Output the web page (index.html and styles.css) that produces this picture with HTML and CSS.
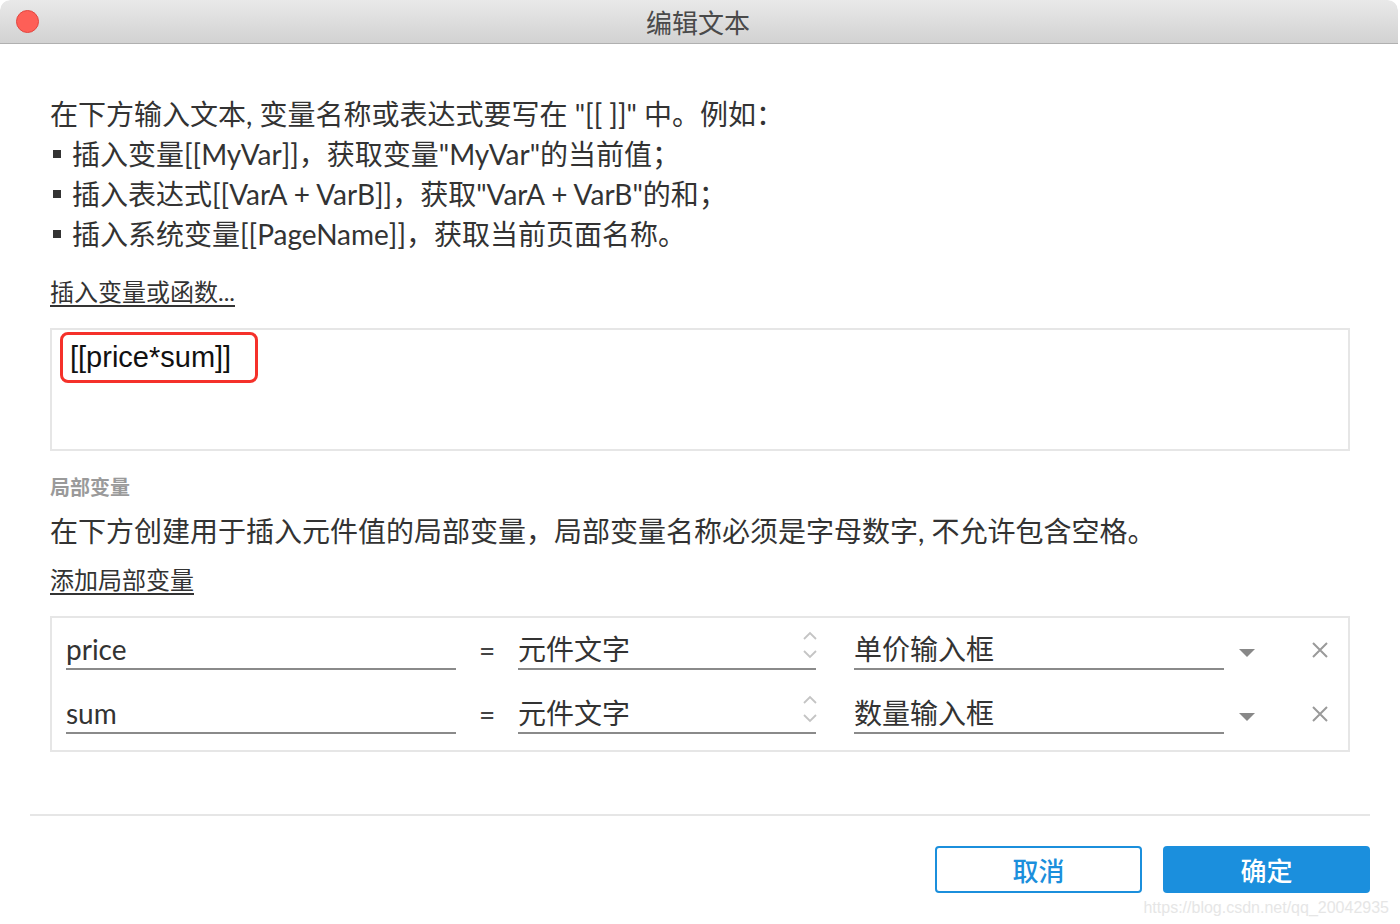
FILE: index.html
```html
<!DOCTYPE html>
<html lang="zh-CN">
<head>
    <meta charset="UTF-8">
    <title>编辑文本</title>
    <link rel="stylesheet" href="styles.css">
</head>
<body>
    <div class="window">
        <div class="titlebar">
            <span class="close-dot"></span>
            <span class="title">编辑文本</span>
        </div>

        <div class="content">
            <div class="intro">
                <p>在下方输入文本, 变量名称或表达式要写在 "[[ ]]" 中。例如：</p>
                <p><span class="bullet"></span>插入变量[[MyVar]]，获取变量"MyVar"的当前值；</p>
                <p><span class="bullet"></span>插入表达式[[VarA + VarB]]，获取"VarA + VarB"的和；</p>
                <p><span class="bullet"></span>插入系统变量[[PageName]]，获取当前页面名称。</p>
            </div>

            <a class="link insert-link">插入变量或函数...</a>

            <div class="text-box">
                <span class="marked">[[price*sum]]</span>
            </div>

            <div class="section-label">局部变量</div>
            <p class="desc">在下方创建用于插入元件值的局部变量，局部变量名称必须是字母数字, 不允许包含空格。</p>
            <a class="link add-link">添加局部变量</a>

            <div class="var-table">
                <div class="var-row">
                    <div class="field name-field">price</div>
                    <div class="equals">=</div>
                    <div class="field type-field">元件文字
                        <svg class="spinner" width="16" height="30" viewBox="0 0 16 30"><path d="M2 9 L8 3 L14 9" fill="none" stroke="#c4c4c4" stroke-width="1.8"/><path d="M2 21 L8 27 L14 21" fill="none" stroke="#c4c4c4" stroke-width="1.8"/></svg>
                    </div>
                    <div class="field target-field">单价输入框</div>
                    <div class="caret"><svg width="18" height="10" viewBox="0 0 18 10"><path d="M1 1 H17 L9 9 Z" fill="#888"/></svg></div>
                    <div class="remove"><svg width="18" height="18" viewBox="0 0 18 18"><path d="M2 2 L16 16 M16 2 L2 16" stroke="#9a9a9a" stroke-width="2"/></svg></div>
                </div>
                <div class="var-row">
                    <div class="field name-field">sum</div>
                    <div class="equals">=</div>
                    <div class="field type-field">元件文字
                        <svg class="spinner" width="16" height="30" viewBox="0 0 16 30"><path d="M2 9 L8 3 L14 9" fill="none" stroke="#c4c4c4" stroke-width="1.8"/><path d="M2 21 L8 27 L14 21" fill="none" stroke="#c4c4c4" stroke-width="1.8"/></svg>
                    </div>
                    <div class="field target-field">数量输入框</div>
                    <div class="caret"><svg width="18" height="10" viewBox="0 0 18 10"><path d="M1 1 H17 L9 9 Z" fill="#888"/></svg></div>
                    <div class="remove"><svg width="18" height="18" viewBox="0 0 18 18"><path d="M2 2 L16 16 M16 2 L2 16" stroke="#9a9a9a" stroke-width="2"/></svg></div>
                </div>
            </div>
        </div>

        <div class="footer">
            <button class="btn btn-cancel">取消</button>
            <button class="btn btn-ok">确定</button>
        </div>

        <div class="watermark">https://blog.csdn.net/qq_20042935</div>
    </div>
</body>
</html>
```

FILE: styles.css
```css
body {
    margin: 0;
    background: #ffffff;
    font-family: 'Lato', 'Noto Sans CJK SC', sans-serif;
    color: #333;
}
.window {
    position: relative;
    width: 1398px;
    height: 924px;
    background: #fff;
    border-radius: 10px;
    overflow: hidden;
}
.titlebar {
    position: relative;
    height: 43px;
    background: linear-gradient(#e9e9e9, #d2d2d2);
    border-bottom: 1px solid #b0b0b0;
    border-radius: 10px 10px 0 0;
    display: flex;
    align-items: center;
    justify-content: center;
}
.close-dot {
    position: absolute;
    left: 16px;
    top: 10px;
    width: 23px;
    height: 23px;
    border-radius: 50%;
    background: #fe5f57;
    border: 1px solid #e2463f;
    box-sizing: border-box;
}
.title {
    font-family: 'Noto Sans CJK SC', sans-serif;
    font-size: 26px;
    color: #4a4a4a;
    margin-left: -2px;
}
.content {
    padding: 50px 48px 0 50px;
}
.intro p {
    margin: 0;
    font-size: 28px;
    line-height: 40px;
    color: #333;
    display: flex;
    align-items: center;
    white-space: nowrap;
}
.bullet {
    display: inline-block;
    width: 8px;
    height: 8px;
    background: #333;
    margin: 0 11px 0 3px;
}
.link {
    display: block;
    font-size: 24px;
    line-height: 30px;
    color: #333;
    text-decoration: underline;
    text-underline-offset: 4px;
}
.insert-link {
    margin-top: 23px;
}
.text-box {
    margin-top: 21px;
    height: 115px;
    border: 2px solid #e6e6e6;
    padding: 2px 8px;
}
.marked {
    display: inline-block;
    font-family: 'Liberation Sans', sans-serif;
    font-size: 29px;
    color: #111;
    line-height: 45px;
    padding: 0 24px 0 7px;
    border: 3px solid #f5312a;
    border-radius: 8px;
}
.section-label {
    margin-top: 24px;
    font-size: 20px;
    font-weight: bold;
    line-height: 24px;
    color: #9a9a9a;
}
.desc {
    margin: 12px 0 0;
    font-size: 28px;
    line-height: 40px;
    white-space: nowrap;
}
.add-link {
    margin-top: 14px;
}
.var-table {
    margin-top: 21px;
    border: 2px solid #e6e6e6;
    padding: 12px 0 16px 14px;
    display: flex;
    flex-direction: column;
    gap: 24px;
}
.var-row {
    display: flex;
    align-items: flex-start;
    height: 40px;
}
.field {
    position: relative;
    height: 38px;
    line-height: 38px;
    font-size: 28px;
    color: #333;
    border-bottom: 2px solid #8a8a8a;
}
.name-field {
    width: 390px;
}
.equals {
    width: 62px;
    text-align: center;
    font-size: 28px;
    line-height: 40px;
    color: #444;
}
.type-field {
    width: 298px;
    margin-right: 38px;
}
.spinner {
    position: absolute;
    right: -2px;
    top: 0;
}
.target-field {
    width: 370px;
}
.caret {
    width: 46px;
    display: flex;
    justify-content: center;
    padding-top: 18px;
}
.remove {
    width: 52px;
    margin-left: 24px;
    display: flex;
    justify-content: center;
    padding-top: 11px;
}
.footer {
    margin: 62px 28px 0 30px;
    border-top: 2px solid #e6e6e6;
    padding-top: 30px;
    display: flex;
    justify-content: flex-end;
    gap: 21px;
}
.btn {
    width: 207px;
    height: 47px;
    font-family: 'Noto Sans CJK SC', sans-serif;
    font-size: 26px;
    font-weight: 500;
    border-radius: 4px;
    cursor: pointer;
}
.btn-cancel {
    background: #fff;
    color: #1b8fdc;
    border: 2px solid #1b8fdc;
}
.btn-ok {
    background: #1b8fdd;
    color: #fff;
    border: none;
}
.watermark {
    position: absolute;
    right: 9px;
    bottom: 7px;
    font-family: 'Liberation Sans', sans-serif;
    font-size: 16px;
    color: #e6e6e6;
}
```
